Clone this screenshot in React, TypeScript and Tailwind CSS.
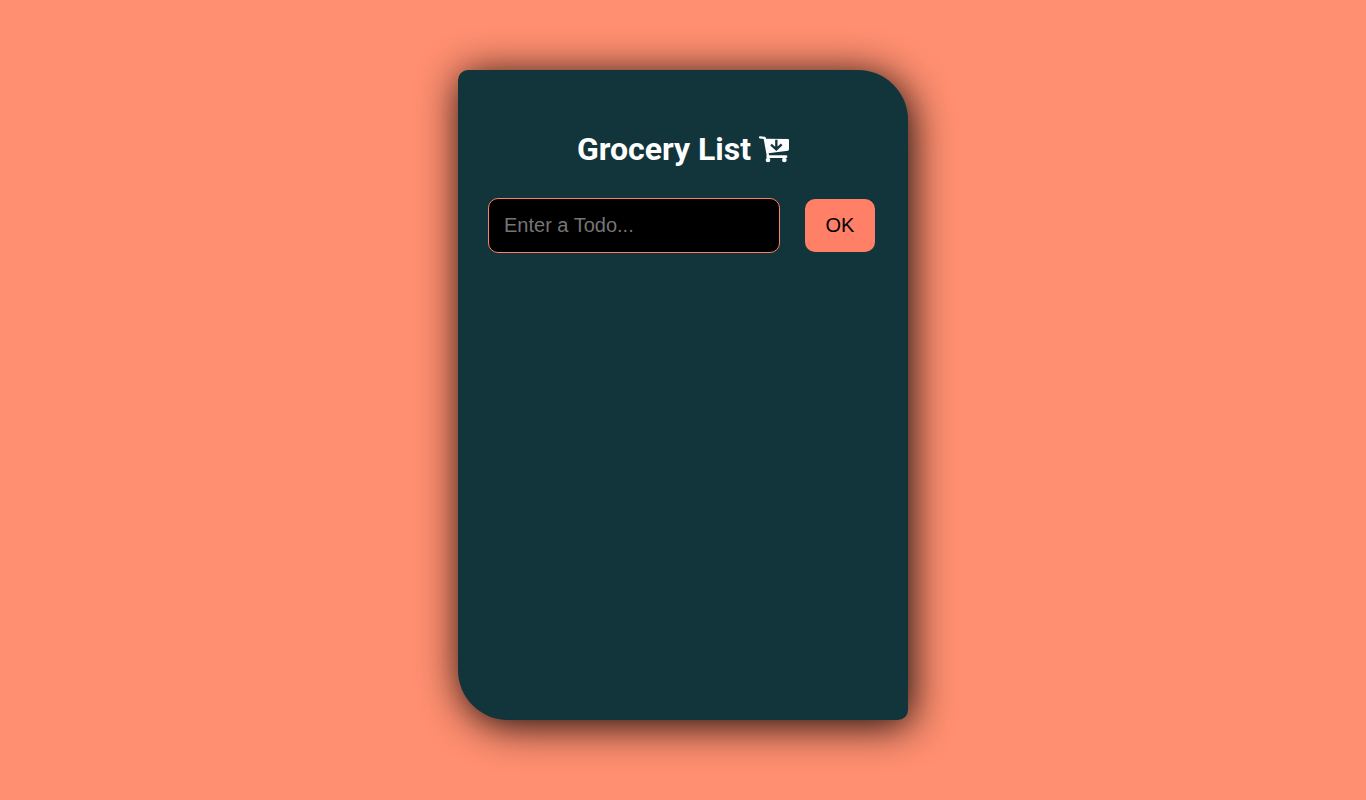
import { useState } from "react";

function CartIcon() {
  return (
    <svg viewBox="0 0 90 84" className="h-7 w-[30px]" fill="none" stroke="currentColor" aria-hidden="true">
      <path d="M3 7L17 9L27 63" strokeWidth="7" strokeLinecap="round" strokeLinejoin="round" />
      <path d="M19 11L87 12Q90 12 90 15V43Q90 46 87 47L28 55Z" fill="currentColor" stroke="none" />
      <path d="M26 65H81" strokeWidth="8" strokeLinecap="round" />
      <circle cx="27" cy="75" r="7" fill="currentColor" stroke="none" />
      <circle cx="76" cy="75" r="7" fill="currentColor" stroke="none" />
      <path d="M52 14V42M36 29L52 43L68 28" stroke="#12353b" strokeWidth="7" />
    </svg>
  );
}

export default function App() {
  const [todo, setTodo] = useState("");

  return (
    <main className="flex min-h-screen items-start justify-center bg-[#ff8f70] px-4 py-[70px] font-['Roboto',sans-serif]">
      <section className="min-h-[650px] w-full max-w-[450px] rounded-[10px_50px_10px_50px] bg-[#12353b] px-[30px] pt-[60px] shadow-[3px_5px_40px_rgba(0,0,0,0.95)]">
        <h1 className="flex items-center justify-center gap-2 text-[32px] leading-[38px] font-bold text-white">
          Grocery List
          <CartIcon />
        </h1>
        <form className="mt-[30px] flex items-center gap-[25px]" onSubmit={(e) => e.preventDefault()}>
          <input
            type="text"
            aria-label="Todo"
            placeholder="Enter a Todo..."
            value={todo}
            onChange={(e) => setTodo(e.target.value)}
            className="h-[55px] w-[292px] min-w-0 rounded-[10px] border border-[#ff8066] bg-black px-[15px] font-['Liberation_Sans',sans-serif] text-[20px] text-white outline-none placeholder:text-[#757575]"
          />
          <button type="submit" className="w-[70px] rounded-[10px] bg-[#ff8066] py-[15px] font-['Liberation_Sans',sans-serif] text-[20px] leading-[23px] text-black">
            OK
          </button>
        </form>
      </section>
    </main>
  );
}
